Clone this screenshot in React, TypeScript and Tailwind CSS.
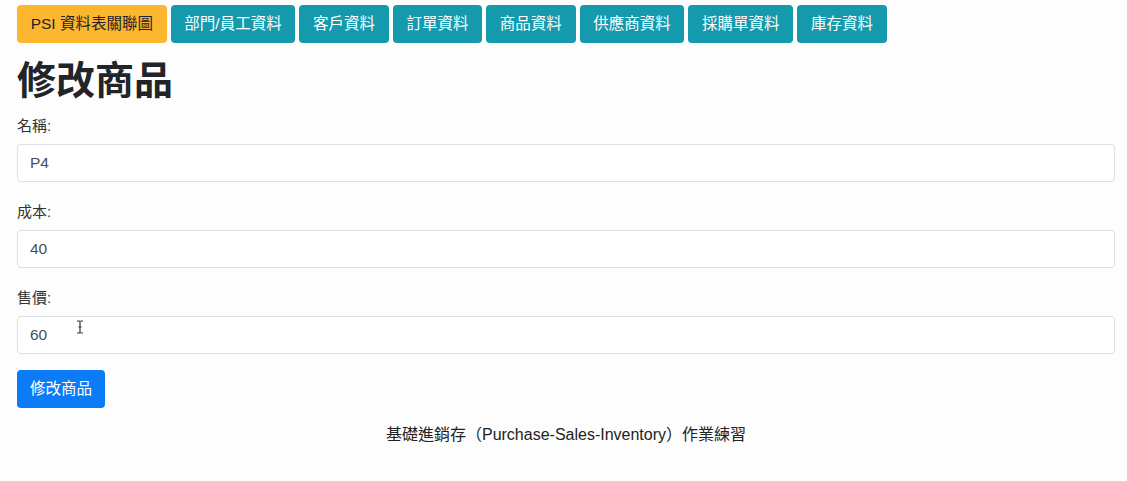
const navItems = ["部門/員工資料", "客戶資料", "訂單資料", "商品資料", "供應商資料", "採購單資料", "庫存資料"];

const fields = [
  { label: "名稱:", value: "P4" },
  { label: "成本:", value: "40" },
  { label: "售價:", value: "60" },
];

export default function App() {
  return (
    <div
      className="min-h-[481px] w-full bg-[#fdfdfd] pl-[17px] pr-[12px] text-[#212529]"
      style={{ fontFamily: '"Liberation Sans", "Noto Sans CJK TC", sans-serif' }}
    >
      <nav className="flex gap-[4px] pt-[5px]">
        <button className="h-[38px] rounded-[4px] bg-[#fdb62f] px-[13.7px] text-[15.5px] text-[#212529]">
          PSI 資料表關聯圖
        </button>
        {navItems.map((item) => (
          <button
            key={item}
            className="h-[38px] rounded-[4px] bg-[#1599ad] px-[13.7px] text-[15.5px] text-white"
          >
            {item}
          </button>
        ))}
      </nav>

      <h1 className="mt-[15px] text-[39px] font-bold leading-[45px]">修改商品</h1>

      <form className="mt-[12px]">
        {fields.map((f, i) => (
          <div key={f.label} className="mb-[19px]">
            <label className="block text-[15px] leading-[21px] text-[#333]">{f.label}</label>
            <div className="relative mt-[8px]">
              <input
                readOnly
                value={f.value}
                className="h-[38px] w-full rounded-[4px] border border-[#dcdfe3] bg-white px-[12px] text-[15.5px] text-[#495057] outline-none"
              />
              {i === 2 && (
                <svg className="absolute left-[59px] top-[4px]" width="8" height="14" viewBox="0 0 8 14">
                  <path d="M1 1h2.5c.5 0 .5 1 .5 1v10s0 1-.5 1H1M7 1H4.5M7 13H4.5M2.5 7h3" stroke="#333" strokeWidth="1.2" fill="none" />
                </svg>
              )}
            </div>
          </div>
        ))}
        <button
          type="button"
          className="-mt-[3px] h-[38px] rounded-[4px] bg-[#0b7bf7] px-[13px] text-[15.5px] text-white"
        >
          修改商品
        </button>
      </form>

      <footer className="mt-[16px] text-center text-[16px] leading-[21px] text-[#222]">
        基礎進銷存（Purchase-Sales-Inventory）作業練習
      </footer>
    </div>
  );
}
